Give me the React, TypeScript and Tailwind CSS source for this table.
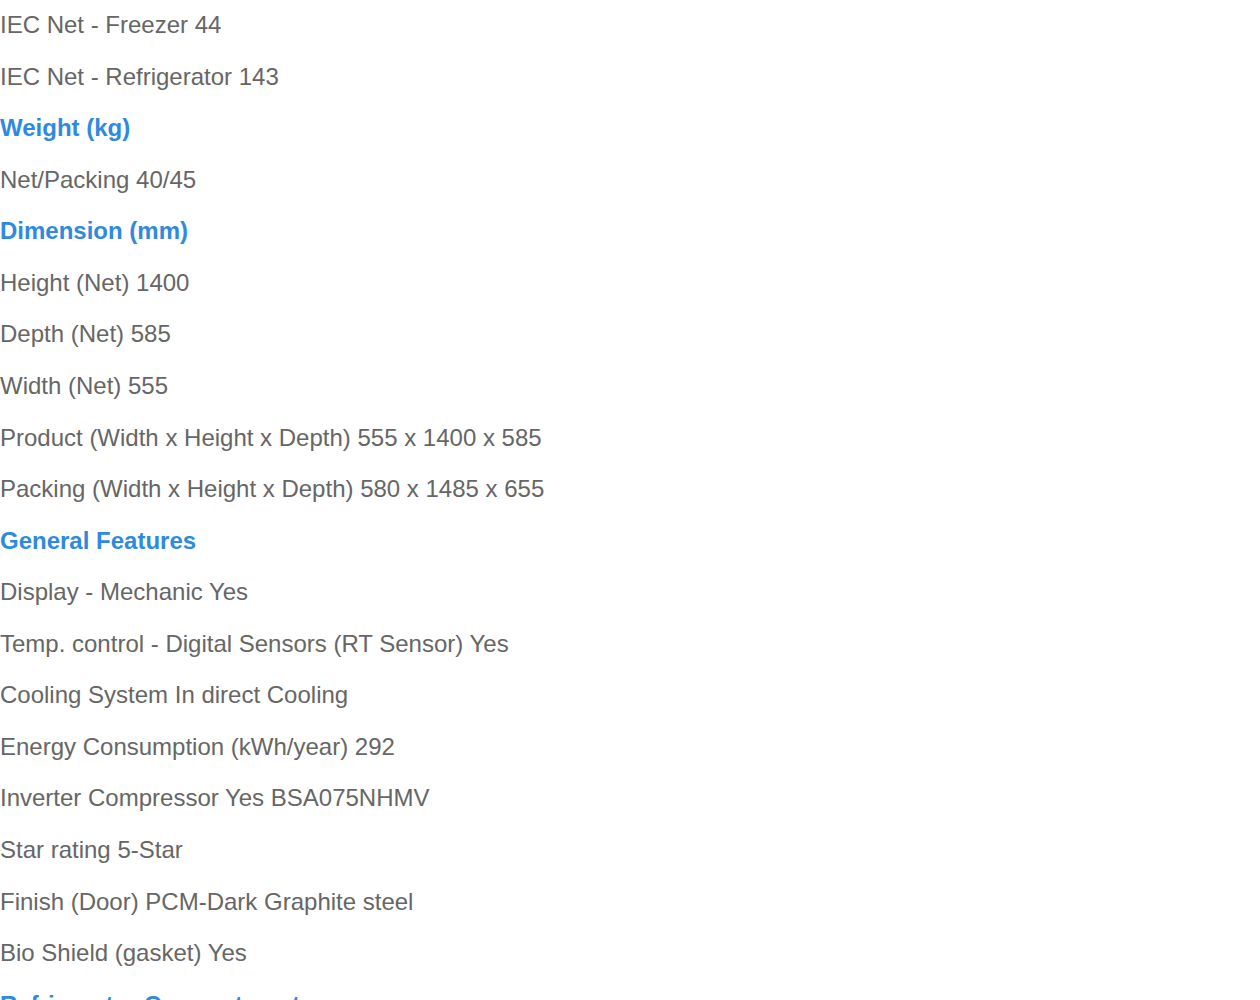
import React from 'react';

type Row = { text: string; heading?: boolean };

const rows: Row[] = [
    { text: 'IEC Net - Freezer 44' },
    { text: 'IEC Net - Refrigerator 143' },
    { text: 'Weight (kg)', heading: true },
    { text: 'Net/Packing 40/45' },
    { text: 'Dimension (mm)', heading: true },
    { text: 'Height (Net) 1400' },
    { text: 'Depth (Net) 585' },
    { text: 'Width (Net) 555' },
    { text: 'Product (Width x Height x Depth) 555 x 1400 x 585' },
    { text: 'Packing (Width x Height x Depth) 580 x 1485 x 655' },
    { text: 'General Features', heading: true },
    { text: 'Display - Mechanic Yes' },
    { text: 'Temp. control - Digital Sensors (RT Sensor) Yes' },
    { text: 'Cooling System In direct Cooling' },
    { text: 'Energy Consumption (kWh/year) 292' },
    { text: 'Inverter Compressor Yes BSA075NHMV' },
    { text: 'Star rating 5-Star' },
    { text: 'Finish (Door) PCM-Dark Graphite steel' },
    { text: 'Bio Shield (gasket) Yes' },
    { text: 'Refrigerator Compartment', heading: true },
];

export default function App() {
    return (
        <section className="w-[1260px] h-[1000px] overflow-hidden bg-white font-['Liberation_Sans',Arial,sans-serif] text-[24px]">
            <div className="-mt-px">
                {rows.map((row, i) => (
                    <p
                        key={i}
                        className={
                            row.heading
                                ? 'leading-[51.56px] font-bold text-[#2e8ae0]'
                                : 'leading-[51.56px] text-[#666666]'
                        }
                    >
                        {row.text}
                    </p>
                ))}
            </div>
        </section>
    );
}
